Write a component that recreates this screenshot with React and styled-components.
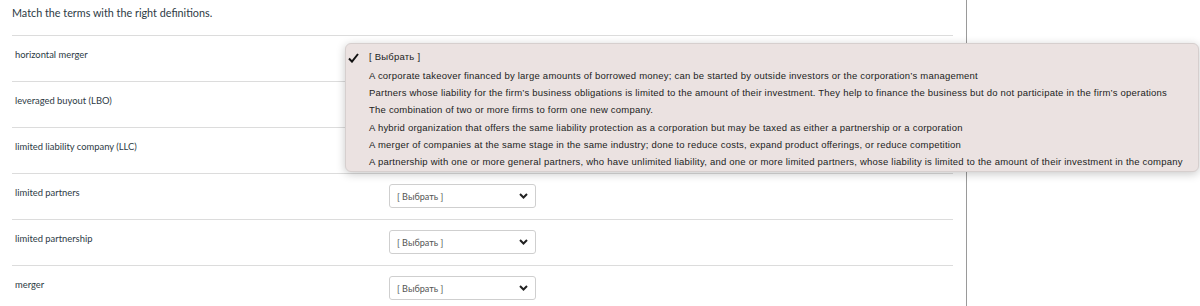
import React from 'react';
import styled, { createGlobalStyle } from 'styled-components';

const terms = [
  'horizontal merger',
  'leveraged buyout (LBO)',
  'limited liability company (LLC)',
  'limited partners',
  'limited partnership',
  'merger',
];

const options = [
  'A corporate takeover financed by large amounts of borrowed money; can be started by outside investors or the corporation’s management',
  'Partners whose liability for the firm’s business obligations is limited to the amount of their investment. They help to finance the business but do not participate in the firm’s operations',
  'The combination of two or more firms to form one new company.',
  'A hybrid organization that offers the same liability protection as a corporation but may be taxed as either a partnership or a corporation',
  'A merger of companies at the same stage in the same industry; done to reduce costs, expand product offerings, or reduce competition',
  'A partnership with one or more general partners, who have unlimited liability, and one or more limited partners, whose liability is limited to the amount of their investment in the company',
];

function Chevron() {
  return (
    <svg width="9" height="6" viewBox="0 0 9 6">
      <polyline points="1,1 4.5,4.5 8,1" fill="none" stroke="#222" strokeWidth="2" />
    </svg>
  );
}

function Check() {
  return (
    <svg width="11" height="10" viewBox="0 0 11 10">
      <polyline points="1,5.5 4,8.6 10,1" fill="none" stroke="#111" strokeWidth="2" />
    </svg>
  );
}

export default function App() {
  return (
    <Page>
      <GlobalStyle />
      <Main>
        <Title>Match the terms with the right definitions.</Title>
        {terms.map((t) => (
          <Row key={t}>
            <Term>{t}</Term>
            <Select>
              <span>[ Выбрать ]</span>
              <Chevron />
            </Select>
          </Row>
        ))}
      </Main>
      <Side />
      <Menu>
        <MenuItem selected>
          <CheckMark>
            <Check />
          </CheckMark>
          [ Выбрать ]
        </MenuItem>
        {options.map((o) => (
          <MenuItem key={o}>{o}</MenuItem>
        ))}
      </Menu>
    </Page>
  );
}

const GlobalStyle = createGlobalStyle`
  body {
    margin: 0;
    background: #fff;
    font-family: Lato, "Open Sans", sans-serif;
  }
`;

const Page = styled.div`
  position: relative;
  display: flex;
  height: 306px;
  overflow: hidden;
`;

const Main = styled.div`
  width: 967px;
  box-sizing: border-box;
  padding: 0 13px 0 12px;
  border-right: 1px solid #9a9a9a;
`;

const Side = styled.div`
  flex: 1;
`;

const Title = styled.div`
  height: 35px;
  box-sizing: border-box;
  padding-top: 6px;
  font-size: 10.8px;
  color: #2d3b45;
`;

const Row = styled.div`
  display: grid;
  grid-template-columns: 377px 147px;
  height: 46px;
  box-sizing: border-box;
  border-top: 1px solid #dcdcdc;
`;

const Term = styled.div`
  padding: 13px 0 0 3px;
  font-size: 9.4px;
  color: #2d3b45;
`;

const Select = styled.div`
  margin-top: 10px;
  height: 24px;
  box-sizing: border-box;
  display: flex;
  align-items: center;
  justify-content: space-between;
  padding: 0 7px 0 7px;
  border: 1px solid #cfcfcf;
  border-radius: 3px;
  background: #fff;
  font-size: 9.1px;
  color: #555;
`;

const Menu = styled.div`
  position: absolute;
  left: 345px;
  top: 43px;
  width: 854px;
  height: 129px;
  box-sizing: border-box;
  padding-top: 5px;
  background: #ebe2e1;
  border: 1px solid #d6cfce;
  border-radius: 6px;
  box-shadow: 0 2px 10px rgba(0, 0, 0, 0.22);
  font-family: "Liberation Sans", Arial, sans-serif;
`;

const MenuItem = styled.div`
  position: relative;
  height: ${(p) => (p.selected ? '18px' : '17.2px')};
  line-height: ${(p) => (p.selected ? '16px' : '17.2px')};
  padding-left: 23px;
  font-size: 9.5px;
  letter-spacing: 0.22px;
  color: #222;
  white-space: nowrap;
`;

const CheckMark = styled.span`
  position: absolute;
  left: 2px;
  top: 3px;
`;
